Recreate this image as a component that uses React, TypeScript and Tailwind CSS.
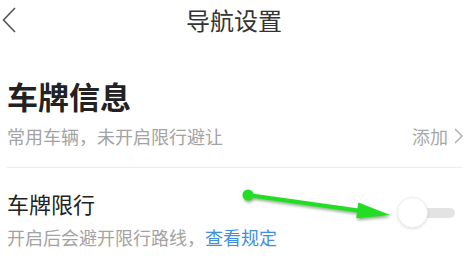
import React from 'react';

const font = { fontFamily: '"Noto Sans CJK SC", "Noto Sans", sans-serif' };

const Toggle: React.FC = () => (
  <div className="relative w-[58px] h-[32px] flex items-center">
    <div className="ml-[8px] w-[50px] h-[10px] rounded-full bg-[#e3e3e3]" />
    <div className="absolute left-0 top-0 w-[31px] h-[31px] rounded-full bg-white border border-[#efefef] shadow-[0_1px_3px_rgba(0,0,0,0.12)]" />
  </div>
);

export default function App() {
  return (
    <div className="relative w-[468px] h-[262px] bg-white overflow-hidden" style={font}>
      <header className="grid grid-cols-[40px_1fr_40px] items-center h-[40px]">
        <svg width="18" height="26" viewBox="0 0 18 26" className="ml-[1px]">
          <path d="M14 1 L2.5 13 L14 25" fill="none" stroke="#555" strokeWidth="1.6" />
        </svg>
        <h1 className="text-center text-[24px] leading-[40px] text-[#333]">导航设置</h1>
        <div />
      </header>

      <section className="pl-[7px] pr-[5px]">
        <h2 className="mt-[38px] h-[36px] leading-[36px] text-[31px] font-bold text-[#222]">车牌信息</h2>
        <div className="mt-[10px] h-[24px] flex items-center justify-between text-[18px] leading-[24px]">
          <span className="text-[#a3a3a3]">常用车辆，未开启限行避让</span>
          <span className="flex items-center gap-[6px] text-[#a8a8a8]">
            添加
            <svg width="9" height="16" viewBox="0 0 9 16">
              <path d="M1 1 L8 8 L1 15" fill="none" stroke="#aaa" strokeWidth="1.4" />
            </svg>
          </span>
        </div>
        <div className="mt-[19px] h-px bg-[#ededed]" />

        <div className="flex items-center justify-between pr-[8px]">
          <div>
            <div className="mt-[21px] h-[28px] leading-[28px] text-[22px] text-[#222]">车牌限行</div>
            <div className="mt-[8px] h-[24px] leading-[24px] text-[18px] text-[#a3a3a3]">
              开启后会避开限行路线，<span className="text-[#3d8fe0]">查看规定</span>
            </div>
          </div>
          <div className="mt-[8px]">
            <Toggle />
          </div>
        </div>
      </section>

      <svg
        className="absolute left-[240px] top-[185px]"
        width="160"
        height="45"
        viewBox="0 0 160 45"
        style={{ filter: 'drop-shadow(1px 2px 1.5px rgba(0,80,0,0.45))' }}
      >
        <circle cx="8" cy="10" r="5.5" fill="#22dd22" />
        <line x1="8" y1="10" x2="120" y2="25.8" stroke="#22dd22" strokeWidth="4" />
        <polygon points="150,30 118.4,17.5 116.2,33.3" fill="#22dd22" />
      </svg>
    </div>
  );
}
